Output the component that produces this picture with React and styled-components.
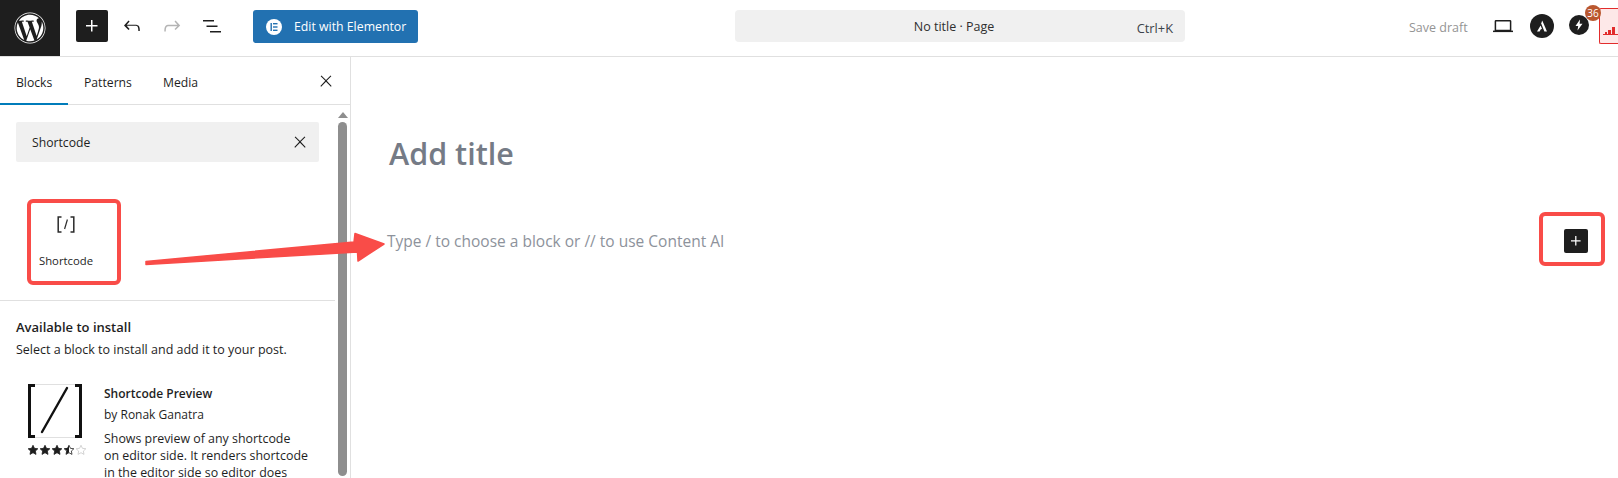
import React from "react";
import styled, { createGlobalStyle } from "styled-components";
import { FaWordpress } from "react-icons/fa";

const GlobalStyle = createGlobalStyle`
  html, body {
    margin: 0;
    padding: 0;
    background: #fff;
  }
  body {
    font-family: "Open Sans", "Noto Sans", sans-serif;
    color: #1e1e1e;
  }
`;

const Page = styled.div`
  position: relative;
  width: 1618px;
  height: 478px;
  overflow: hidden;
  display: flex;
  flex-direction: column;
`;

const TopBar = styled.header`
  height: 56px;
  flex: none;
  display: flex;
  align-items: flex-start;
  border-bottom: 1px solid #e0e0e0;
`;

const WpLogo = styled.div`
  width: 60px;
  height: 56px;
  flex: none;
  background: #1e1e1e;
  color: #fff;
  display: flex;
  align-items: center;
  justify-content: center;
  font-size: 32px;
`;

const InserterButton = styled.div`
  width: 32px;
  height: 32px;
  flex: none;
  margin: 10px 0 0 16px;
  background: #1e1e1e;
  border-radius: 2px;
  display: flex;
  align-items: center;
  justify-content: center;
`;

const ToolIcon = styled.div`
  width: 24px;
  height: 24px;
  flex: none;
  margin: 14px 0 0 ${(p) => p.$left}px;
  color: ${(p) => p.$color || "#1e1e1e"};
`;

const ElementorButton = styled.div`
  width: 165px;
  height: 33px;
  flex: none;
  margin: 10px 0 0 ${(p) => p.$left}px;
  background: #2271b1;
  border-radius: 3px;
  display: flex;
  align-items: center;
  color: #fff;
  font-size: 12.3px;
  box-sizing: border-box;
  padding-left: 13px;
  gap: 12px;
`;

const ElementorMark = styled.span`
  width: 16px;
  height: 16px;
  border-radius: 50%;
  background: #fff;
  display: flex;
  align-items: center;
  justify-content: center;
`;

const CommandCenter = styled.div`
  position: relative;
  width: 450px;
  height: 32px;
  flex: none;
  box-sizing: border-box;
  padding-right: 12px;
  margin: 10px 0 0 317px;
  background: #f0f0f0;
  border-radius: 4px;
  display: flex;
  align-items: center;
  justify-content: center;
  font-size: 12.5px;
  color: #2f2f2f;
`;

const Shortcut = styled.span`
  position: absolute;
  right: 12px;
  top: 9px;
  font-size: 12.8px;
  line-height: 18px;
  color: #3c434a;
`;

const SaveDraft = styled.div`
  margin: 18px 0 0 224px;
  width: 58px;
  flex: none;
  font-size: 12.5px;
  line-height: 20px;
  color: #949494;
  white-space: nowrap;
`;

const RoundBadge = styled.div`
  position: relative;
  flex: none;
  width: ${(p) => p.$size}px;
  height: ${(p) => p.$size}px;
  margin: ${(p) => p.$top}px 0 0 ${(p) => p.$left}px;
  background: #1e1e1e;
  border-radius: 50%;
  display: flex;
  align-items: center;
  justify-content: center;
`;

const Count = styled.span`
  position: absolute;
  top: -10px;
  right: -12px;
  width: 16px;
  height: 16px;
  border-radius: 50%;
  background: #b9572f;
  color: #fff;
  font-size: 10px;
  line-height: 16px;
  text-align: center;
`;

const CacheButton = styled.div`
  flex: none;
  width: 19px;
  height: 36px;
  margin: 8px 0 0 10px;
  box-sizing: border-box;
  background: #fde8e8;
  border: 1px solid #e22c2c;
  border-right: 0;
  border-radius: 2px 0 0 2px;
  padding: 12px 0 0 3px;
`;

const Body = styled.div`
  flex: 1;
  min-height: 0;
  display: flex;
`;

const Sidebar = styled.aside`
  width: 351px;
  flex: none;
  box-sizing: border-box;
  border-right: 1px solid #e0e0e0;
  display: flex;
  flex-direction: column;
  overflow: hidden;
`;

const Tabs = styled.div`
  position: relative;
  height: 47px;
  flex: none;
  display: flex;
  align-items: center;
  border-bottom: 1px solid #e0e0e0;
`;

const Tab = styled.div`
  width: ${(p) => p.$width}px;
  box-sizing: border-box;
  padding-left: 16px;
  height: 47px;
  margin-bottom: -1px;
  font-size: 12.2px;
  line-height: 50px;
  border-bottom: 2px solid ${(p) => (p.$active ? "#007cba" : "transparent")};
`;

const TabClose = styled.div`
  position: absolute;
  left: 317px;
  top: 15px;
  width: 18px;
  height: 18px;
`;

const ScrollArea = styled.div`
  flex: 1;
  min-height: 0;
  display: flex;
`;

const Panel = styled.div`
  width: 335px;
  flex: none;
  display: flex;
  flex-direction: column;
`;

const SearchBox = styled.div`
  width: 303px;
  height: 40px;
  margin: 17px 0 0 16px;
  flex: none;
  background: #f0f0f0;
  border-radius: 2px;
  box-sizing: border-box;
  padding: 0 10px 0 16px;
  display: flex;
  align-items: center;
  justify-content: space-between;
  font-size: 12.2px;
  color: #1e1e1e;
`;

const BlockResult = styled.div`
  height: 139px;
  flex: none;
  box-sizing: border-box;
  padding: 54px 0 0 39px;
  border-bottom: 1px solid #e0e0e0;
`;

const BlockIcon = styled.div`
  width: 20px;
  height: 17px;
  margin-left: 18px;
`;

const BlockLabel = styled.div`
  margin-top: 20px;
  font-size: 11.3px;
  line-height: 16px;
`;

const Section = styled.section`
  padding: 16px 0 0 16px;
`;

const SectionTitle = styled.h2`
  margin: 0;
  font-size: 13px;
  line-height: 20px;
  font-weight: 600;
`;

const SectionText = styled.p`
  margin: 3px 0 0;
  font-size: 12.5px;
  line-height: 20px;
`;

const PluginRow = styled.div`
  display: flex;
  margin-top: 24px;
`;

const PluginAside = styled.div`
  width: 88px;
  flex: none;
  box-sizing: border-box;
  padding-left: 11px;
`;

const PluginThumb = styled.div`
  width: 54px;
  height: 54px;
  margin-left: 1px;
  box-sizing: border-box;
`;

const Stars = styled.div`
  margin-top: 6px;
  width: 60px;
`;

const PluginInfo = styled.div`
  width: 215px;
`;

const PluginName = styled.div`
  font-size: 12px;
  line-height: 20px;
  font-weight: 600;
`;

const PluginBy = styled.div`
  margin-top: 1px;
  font-size: 12px;
  line-height: 20px;
`;

const PluginDesc = styled.div`
  margin-top: 5px;
  font-size: 12.4px;
  line-height: 17px;
  white-space: nowrap;
`;

const Scrollbar = styled.div`
  width: 15px;
  flex: none;
  display: flex;
  flex-direction: column;
  align-items: center;
  box-sizing: border-box;
  padding: 7px 3px 0;
`;

const ScrollArrow = styled.div`
  width: 0;
  height: 0;
  border-left: 5px solid transparent;
  border-right: 5px solid transparent;
  border-bottom: 6px solid #8e8e8e;
`;

const ScrollThumb = styled.div`
  width: 9px;
  flex: 1;
  margin-top: 4px;
  margin-bottom: 2px;
  background: #8e8e8e;
  border-radius: 5px;
`;

const Editor = styled.main`
  flex: 1;
  min-width: 0;
  box-sizing: border-box;
  padding: 72px 0 0 38px;
`;

const TitlePlaceholder = styled.h1`
  margin: 0;
  font-size: 30.5px;
  line-height: 48px;
  font-weight: 600;
  color: #757b86;
`;

const ParagraphPlaceholder = styled.p`
  margin: 52px 0 0 -2px;
  font-size: 15.5px;
  line-height: 24px;
  color: #8d929b;
`;

const AddBlock = styled.div`
  position: absolute;
  left: 1564px;
  top: 229px;
  width: 24px;
  height: 24px;
  background: #1e1e1e;
  border-radius: 2px;
  display: flex;
  align-items: center;
  justify-content: center;
`;

const Callout = styled.div`
  position: absolute;
  left: ${(p) => p.$x}px;
  top: ${(p) => p.$y}px;
  width: ${(p) => p.$w}px;
  height: ${(p) => p.$h}px;
  box-sizing: border-box;
  border: 4px solid #f94c48;
  border-radius: 6px;
`;

const Arrow = styled.svg`
  position: absolute;
  left: 0;
  top: 0;
  pointer-events: none;
`;

const Icon = ({ d, size = 24, fill = "currentColor" }) => (
  <svg width={size} height={size} viewBox="0 0 24 24" fill={fill} style={{ display: "block" }}>
    <path d={d} />
  </svg>
);

const PLUS = "M11 12.5V17.5H12.5V12.5H17.5V11H12.5V6H11V11H6V12.5H11Z";
const UNDO =
  "M18.3 11.7c-.6-.6-1.4-.9-2.3-.9H6.7l2.9-3.3-1.1-1-4.5 5L8.5 16l1.1-1-2.9-3.2H16c.5 0 .9.2 1.3.5 1 1 1 3.4 1 4.5v.3h1.5v-.2c0-1.5 0-4.3-1.5-5.7z";
const REDO =
  "M15.6 6.5l-1.1 1 2.9 3.3H8c-.9 0-1.7.3-2.3.9-1.4 1.5-1.4 4.2-1.4 5.6v.2h1.5v-.3c0-1.1 0-3.5 1-4.5.3-.3.7-.5 1.3-.5h9.2L14.5 15l1.1 1.1 4.6-4.6-4.6-5z";
const LIST = "M3 6h11v1.5H3V6Zm3.5 5.5h11V13h-11v-1.5ZM21 17H10v1.5h11V17Z";
const CLOSE =
  "M13 11.8l6.1-6.3-1-1-6.1 6.2-6.1-6.2-1 1 6.1 6.3-6.5 6.7 1 1 6.5-6.6 6.5 6.6 1-1z";
const STAR = "M12 2.5l2.9 6.2 6.8.8-5 4.6 1.3 6.7-6-3.4-6 3.4 1.3-6.7-5-4.6 6.8-.8z";

const StarRating = () => (
  <Stars>
    <svg width="60" height="12" viewBox="0 0 60 12" style={{ display: "block" }}>
      {[0, 1, 2, 3, 4].map((i) => (
        <g key={i} transform={`translate(${i * 12} 0) scale(0.5)`}>
          <path
            d={STAR}
            fill={i < 3 ? "#1e1e1e" : "none"}
            stroke={i < 4 ? "#1e1e1e" : "#c8c8c8"}
            strokeWidth="1.6"
          />
          {i === 3 && <path d="M12 2.5v14.4l-6 3.4 1.3-6.7-5-4.6 6.8-.8z" fill="#1e1e1e" />}
        </g>
      ))}
    </svg>
  </Stars>
);

export default function App() {
  return (
    <>
      <GlobalStyle />
      <Page>
        <TopBar>
          <WpLogo>
            <FaWordpress />
          </WpLogo>
          <InserterButton>
            <Icon d={PLUS} fill="#fff" />
          </InserterButton>
          <ToolIcon $left={12}>
            <Icon d={UNDO} />
          </ToolIcon>
          <ToolIcon $left={16} $color="#b4b4b4">
            <Icon d={REDO} />
          </ToolIcon>
          <ToolIcon $left={16}>
            <Icon d={LIST} />
          </ToolIcon>
          <ElementorButton $left={29}>
            <ElementorMark>
              <svg width="10" height="10" viewBox="0 0 10 10" fill="#2271b1">
                <rect x="1.5" y="1" width="1.4" height="8" />
                <rect x="4" y="1" width="4.5" height="1.4" />
                <rect x="4" y="4.3" width="4.5" height="1.4" />
                <rect x="4" y="7.6" width="4.5" height="1.4" />
              </svg>
            </ElementorMark>
            Edit with Elementor
          </ElementorButton>
          <CommandCenter>
            No title · Page
            <Shortcut>Ctrl+K</Shortcut>
          </CommandCenter>
          <SaveDraft>Save draft</SaveDraft>
          <ToolIcon $left={24}>
            <svg width="24" height="24" viewBox="0 0 24 24" style={{ display: "block" }}>
              <path d="M5 6.7h14a.6.6 0 0 1 .6.6v9.2H4.4V7.3a.6.6 0 0 1 .6-.6z" fill="none" stroke="#1e1e1e" strokeWidth="1.5" />
              <path d="M2 16.6h20v1.5H2z" fill="#1e1e1e" />
            </svg>
          </ToolIcon>
          <RoundBadge $size={24} $top={14} $left={15}>
            <svg width="14" height="14" viewBox="0 0 14 14" fill="#fff">
              <path d="M7.2 1.5 L12 12.5 H9.4 L6.2 4.5z" />
              <path d="M5.6 6.6 L7 10 L5.8 10.2 L4.6 12.5 H2z" />
            </svg>
          </RoundBadge>
          <RoundBadge $size={20} $top={15} $left={15}>
            <svg width="12" height="12" viewBox="0 0 12 12" fill="#fff">
              <path d="M7 .5 L2.5 7 H5.2 L4.5 11.5 L9.5 4.8 H6.6z" />
            </svg>
            <Count>36</Count>
          </RoundBadge>
          <CacheButton>
            <svg width="15" height="12" viewBox="0 0 15 12" fill="#e22c2c">
              <rect x="0" y="8" width="15" height="1" />
              <rect x="2" y="6" width="2" height="3" />
              <rect x="5" y="4" width="3" height="5" />
              <rect x="9" y="1" width="3" height="8" />
            </svg>
          </CacheButton>
        </TopBar>
        <Body>
          <Sidebar>
            <Tabs>
              <Tab $active $width={68}>Blocks</Tab>
              <Tab $width={79}>Patterns</Tab>
              <Tab $width={80}>Media</Tab>
              <TabClose>
                <Icon d={CLOSE} size={18} />
              </TabClose>
            </Tabs>
            <ScrollArea>
              <Panel>
                <SearchBox>
                  Shortcode
                  <Icon d={CLOSE} size={18} />
                </SearchBox>
                <BlockResult>
                  <BlockIcon>
                    <svg width="18" height="17" viewBox="0 0 18 17" fill="none" stroke="#2a2a2a" strokeWidth="1.5" style={{ display: "block" }}>
                      <path d="M4.5 1H1.2v15h3.3" />
                      <path d="M13.5 1h3.3v15h-3.3" />
                      <path d="M10.4 3.5 7.6 13" strokeWidth="1.2" />
                    </svg>
                  </BlockIcon>
                  <BlockLabel>Shortcode</BlockLabel>
                </BlockResult>
                <Section>
                  <SectionTitle>Available to install</SectionTitle>
                  <SectionText>Select a block to install and add it to your post.</SectionText>
                  <PluginRow>
                    <PluginAside>
                      <PluginThumb>
                        <svg width="54" height="54" viewBox="0 0 54 54" fill="none" style={{ display: "block" }}>
                          <rect x="0.5" y="0.5" width="53" height="53" stroke="#e0e0e0" />
                          <path d="M7 1.5H1.5v51H7M47 1.5h5.5v51H47" stroke="#111" strokeWidth="3" />
                          <path d="M39 4 14 48" stroke="#111" strokeWidth="2.4" strokeLinecap="round" />
                        </svg>
                      </PluginThumb>
                      <StarRating />
                    </PluginAside>
                    <PluginInfo>
                      <PluginName>Shortcode Preview</PluginName>
                      <PluginBy>by Ronak Ganatra</PluginBy>
                      <PluginDesc>
                        Shows preview of any shortcode
                        <br />
                        on editor side. It renders shortcode
                        <br />
                        in the editor side so editor does
                      </PluginDesc>
                    </PluginInfo>
                  </PluginRow>
                </Section>
              </Panel>
              <Scrollbar>
                <ScrollArrow />
                <ScrollThumb />
              </Scrollbar>
            </ScrollArea>
          </Sidebar>
          <Editor>
            <TitlePlaceholder>Add title</TitlePlaceholder>
            <ParagraphPlaceholder>Type / to choose a block or // to use Content AI</ParagraphPlaceholder>
          </Editor>
        </Body>
        <AddBlock>
          <Icon d={PLUS} fill="#fff" size={20} />
        </AddBlock>
        <Callout $x={27} $y={199} $w={94} $h={86} />
        <Callout $x={1539} $y={212} $w={66} $h={54} />
        <Arrow width="1618" height="478">
          <path
            d="M146 261.5 L354 242 L355 233.5 L384 244 L358 261 L357.5 252 L146 264.5 Z"
            fill="#f94c48"
            stroke="#f94c48"
            strokeWidth="1.5"
            strokeLinejoin="round"
          />
        </Arrow>
      </Page>
    </>
  );
}
